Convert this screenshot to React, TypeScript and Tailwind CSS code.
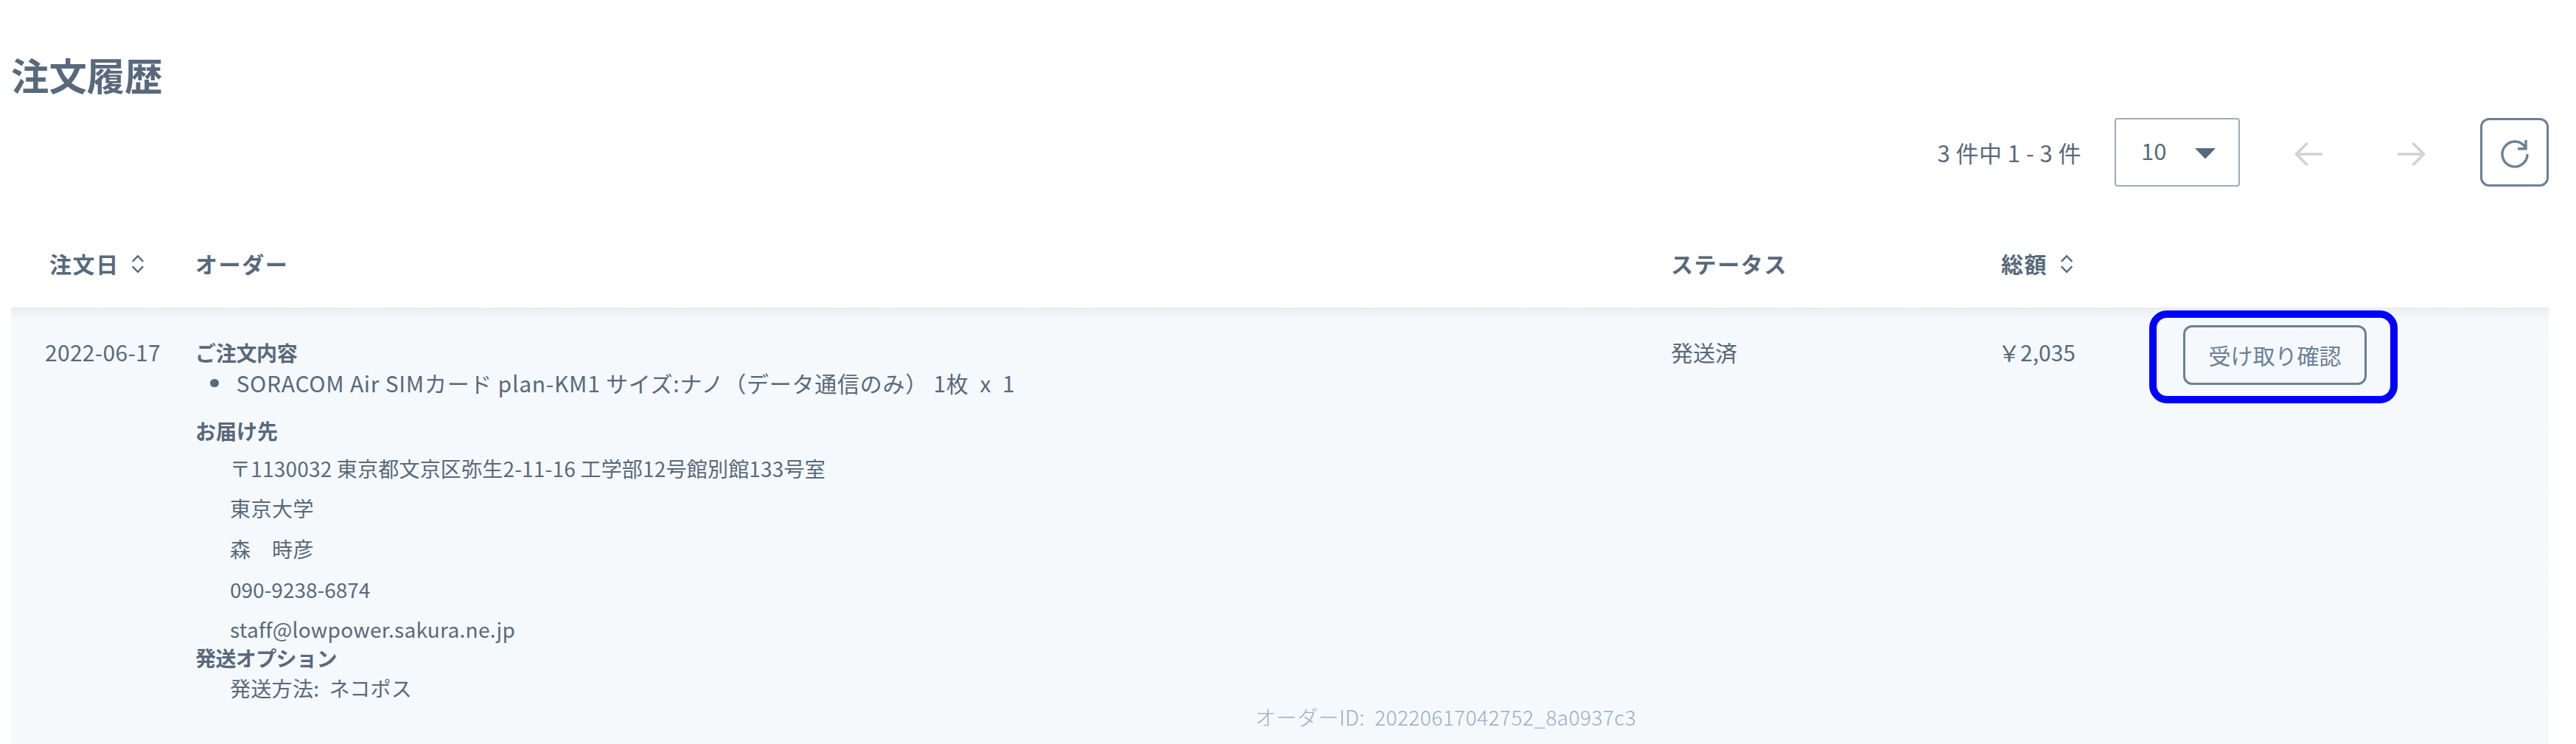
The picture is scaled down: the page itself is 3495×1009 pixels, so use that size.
import React from "react";

function Sort() {
  return (
    <svg className="relative top-px h-[26px] w-4" viewBox="0 0 16 26" fill="none" stroke="#58697b" strokeWidth="2.4">
      <path d="M0.8 9.7 8 2.2l7.2 7.5M0.8 16.3 8 23.8l7.2-7.5" />
    </svg>
  );
}

function Arrow({ flip = false }: { flip?: boolean }) {
  return (
    <svg className={flip ? "h-[34px] w-[38px] -scale-x-100" : "h-[34px] w-[38px]"} viewBox="0 0 38 34" fill="none" stroke="#d0d2d6" strokeWidth="3.7">
      <path d="M38 17H2.5M17.5 2 2.5 17l15 15" />
    </svg>
  );
}

export default function App() {
  return (
    <main className="h-[1009px] w-[3495px] overflow-hidden bg-white pr-[37px] pl-[15px] font-['Noto_Sans_CJK_JP',sans-serif] text-[30px] leading-[44px] text-[#58697b]">
      <h1 className="h-[160px] pt-[63px] text-[51.4px] leading-[76px] font-bold">注文履歴</h1>

      <div className="flex h-[93px] items-center justify-end">
        <span className="mr-[45px] text-[31px] tracking-[0.45px]">3 件中 1 - 3 件</span>
        <div className="flex h-[93px] w-[170px] items-center rounded-[4px] border-2 border-[#9aacc0] pl-[34px]">
          <span className="-mt-[6px] text-[31px]">10</span>
          <svg className="mt-[3px] ml-[39px] h-[14.5px] w-[28px]" viewBox="0 0 28 14" preserveAspectRatio="none" fill="#58697b">
            <path d="M0 0h28L14 14z" />
          </svg>
        </div>
        <button className="ml-[74px] pt-1"><Arrow /></button>
        <button className="ml-[102px] pt-1"><Arrow flip /></button>
        <button className="ml-[74px] flex size-[93px] items-center justify-center rounded-xl border-[3px] border-[#6b8096] pt-1">
          <svg className="size-10" viewBox="0 0 40 40" fill="none" stroke="#6b8096" strokeWidth="3.4">
            <path d="M37 20A17 17 0 1 1 34.4 11M35 1V12.8H24" />
          </svg>
        </button>
      </div>

      <div className="grid h-[164px] grid-cols-[251px_2001px_448px_auto] pt-[82px] font-bold tracking-[1.6px]">
        <div className="flex items-center gap-[17.5px] self-start pl-[52px]">注文日<Sort /></div>
        <div className="-ml-px">オーダー</div>
        <div>ステータス</div>
        <div className="flex items-center gap-[17.5px] self-start">総額<Sort /></div>
      </div>

      <section className="grid h-[592px] grid-cols-[250px_2002px_447px_auto] bg-[#f5f9fc] bg-linear-to-b from-[#e9eef3] to-[#f5f9fc] to-[16px]">
        <div className="pt-[38px] pl-[46px] tracking-[0.3px]">2022-06-17</div>
        <div className="pt-[41px] text-[28px] leading-[41px]">
          <h2 className="font-bold tracking-[-0.3px]">ご注文内容</h2>
          <div className="flex items-center text-[30px] tracking-[0.735px] whitespace-pre">
            <span className="mr-[24px] ml-[20px] size-[11.5px] rounded-full bg-[#58697b]" />
            SORACOM Air SIMカード plan-KM1 サイズ:ナノ（データ通信のみ） 1枚  x  1
          </div>
          <h2 className="mt-[24px] font-bold">お届け先</h2>
          <address className="mt-[2.5px] pl-[47px] leading-[54.7px] not-italic">
            <div className="tracking-[0.2px]">〒1130032 東京都文京区弥生2-11-16 工学部12号館別館133号室</div>
            <div className="tracking-[0.5px]">東京大学</div>
            <div className="tracking-[0.5px]">森　時彦</div>
            <div>090-9238-6874</div>
            <div className="tracking-[0.27px]">staff@lowpower.sakura.ne.jp</div>
          </address>
          <h2 className="-mt-[9px] font-bold tracking-[-0.6px]">発送オプション</h2>
          <div className="pl-[47px] tracking-[0.3px] whitespace-pre">発送方法:  ネコポス</div>
          <div className="-mt-[2.5px] pr-[47px] text-right font-light tracking-[0.46px] whitespace-pre text-[#9dadbf]">オーダーID:  20220617042752_8a0937c3</div>
        </div>
        <div className="pt-[38px]">発送済</div>
        <div className="relative">
          <div className="-ml-[3px] pt-[38px]">￥2,035</div>
          <div className="absolute top-[4px] left-[202px] h-[126px] w-[337px] rounded-[24px] border-[10px] border-[#0000ff] pt-[10px] pl-[36px]">
            <button className="h-[81px] w-[249px] rounded-xl border-[3px] border-[#6b8096] pb-[2px] text-[#6b8096]">受け取り確認</button>
          </div>
        </div>
      </section>
    </main>
  );
}
